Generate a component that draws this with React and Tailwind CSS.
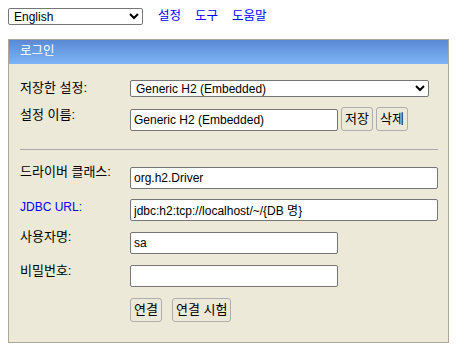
import React from 'react'

const font = { fontFamily: '"Liberation Sans", Arial, "Noto Sans CJK KR", sans-serif' }

const inputCls = 'h-[22px] border border-[#767676] rounded-[2px] bg-white px-[3px] text-[12px] text-black outline-none'
const btnCls = 'h-[24px] px-[3px] border border-[#adadad] rounded-[3px] bg-[#ece9d8] text-[13px] text-black leading-none'

const Row = ({ label, blue, children, className = '', labelClass = '' }) => (
  <div className={'flex ' + className}>
    <div className={'w-[110px] shrink-0 self-start ' + (blue ? 'leading-4 text-[12px] text-[#0000ff]' : 'leading-[9px] text-[13px] text-black') + ' ' + labelClass}>
      {label}
    </div>
    {children}
  </div>
)

const App = () => {
  return (
    <div className="w-[464px] h-[353px] bg-white" style={font}>
      <div className="flex items-center pt-[7px] pl-2">
        <select className="w-[135px] h-[17px] border border-[#767676] rounded-[2px] bg-white text-[12px] text-black pl-[1px]" defaultValue="en">
          <option value="en">English</option>
        </select>
        <div className="flex ml-[15px] text-[12.5px] text-[#0000ff]">
          <a href="#" className="w-[37px]">설정</a>
          <a href="#" className="w-[37px]">도구</a>
          <a href="#">도움말</a>
        </div>
      </div>

      <div className="ml-2 mt-[13px] w-[441px] border border-[#aca899] bg-[#ece9d8]">
        <div className="h-[24px] flex items-center pl-[11px] text-[12.5px] text-white bg-gradient-to-b from-[#5a89d4] to-[#7cb4f5]">
          로그인
        </div>

        <div className="pl-[11px] pb-[20px]">
          <Row label="저장한 설정:" className="mt-[16px]" labelClass="pt-[3px]">
            <select className="w-[299px] h-[17px] border border-[#767676] rounded-[2px] bg-white text-[12px] text-black pl-[1px]" defaultValue="g">
              <option value="g">Generic H2 (Embedded)</option>
            </select>
          </Row>

          <Row label="설정 이름:" className="mt-[10px] items-end" labelClass="pt-[3px]">
            <input className={inputCls + ' w-[208px]'} defaultValue="Generic H2 (Embedded)" />
            <button className={btnCls + ' ml-[3px]'}>저장</button>
            <button className={btnCls + ' ml-[3px]'}>삭제</button>
          </Row>

          <div className="mt-[18px] mr-[10px] border-t border-[#a9a9a9]" />

          <Row label="드라이버 클래스:" className="mt-[17px]">
            <input className={inputCls + ' w-[308px]'} defaultValue="org.h2.Driver" />
          </Row>

          <Row label="JDBC URL:" blue className="mt-[10px]">
            <input className={inputCls + ' w-[308px]'} defaultValue="jdbc:h2:tcp://localhost/~/{DB 명}" />
          </Row>

          <Row label="사용자명:" className="mt-[11px]">
            <input className={inputCls + ' w-[208px]'} defaultValue="sa" />
          </Row>

          <Row label="비밀번호:" className="mt-[11px]" labelClass="pt-[1px]">
            <input type="password" className={inputCls + ' w-[208px]'} defaultValue="" />
          </Row>

          <Row label="" className="mt-[11px]">
            <button className={btnCls}>연결</button>
            <button className={btnCls + ' ml-[10px]'}>연결 시험</button>
          </Row>
        </div>
      </div>
    </div>
  )
}

export default App
